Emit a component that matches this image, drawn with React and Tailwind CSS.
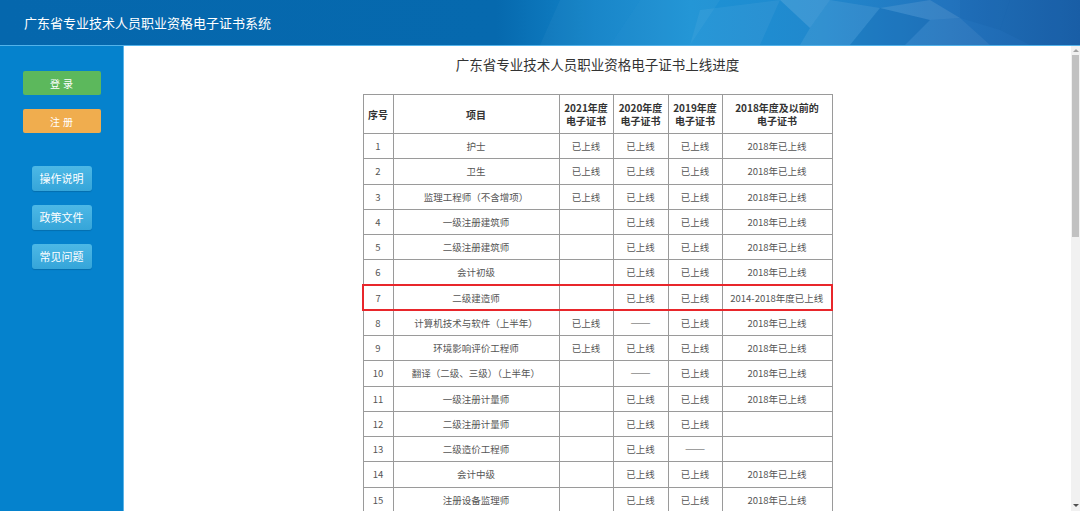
import React from "react";

const rows = [
  ["1", "护士", "已上线", "已上线", "已上线", "2018年已上线"],
  ["2", "卫生", "已上线", "已上线", "已上线", "2018年已上线"],
  ["3", "监理工程师（不含增项）", "已上线", "已上线", "已上线", "2018年已上线"],
  ["4", "一级注册建筑师", "", "已上线", "已上线", "2018年已上线"],
  ["5", "二级注册建筑师", "", "已上线", "已上线", "2018年已上线"],
  ["6", "会计初级", "", "已上线", "已上线", "2018年已上线"],
  ["7", "二级建造师", "", "已上线", "已上线", "2014-2018年度已上线"],
  ["8", "计算机技术与软件（上半年）", "已上线", "——", "已上线", "2018年已上线"],
  ["9", "环境影响评价工程师", "已上线", "已上线", "已上线", "2018年已上线"],
  ["10", "翻译（二级、三级）（上半年）", "", "——", "已上线", "2018年已上线"],
  ["11", "一级注册计量师", "", "已上线", "已上线", "2018年已上线"],
  ["12", "二级注册计量师", "", "已上线", "已上线", ""],
  ["13", "二级造价工程师", "", "已上线", "——", ""],
  ["14", "会计中级", "", "已上线", "已上线", "2018年已上线"],
  ["15", "注册设备监理师", "", "已上线", "已上线", "2018年已上线"],
];

const widths = ["w-[30px]", "w-[166px]", "w-[54px]", "w-[55px]", "w-[54px]", "w-[110px]"];

function HeaderArt() {
  return (
    <svg className="absolute inset-0 h-full w-full" viewBox="0 0 1080 45" preserveAspectRatio="none">
      <polygon points="640,0 720,0 690,45 610,45" fill="#ffffff" opacity="0.04" />
      <polygon points="780,0 830,0 810,28" fill="#ffffff" opacity="0.12" />
      <polygon points="810,28 830,0 880,8 850,45 800,45" fill="#ffffff" opacity="0.08" />
      <polygon points="850,45 880,8 930,20 905,45" fill="#0b4f94" opacity="0.12" />
      <polygon points="880,8 930,0 960,18 930,20" fill="#ffffff" opacity="0.10" />
      <polygon points="930,20 960,18 990,45 905,45" fill="#ffffff" opacity="0.06" />
      <polygon points="960,0 1010,0 1000,30 960,18" fill="#0b4f94" opacity="0.10" />
      <polygon points="1010,0 1080,0 1080,45 1030,45 1000,30" fill="#0b4f94" opacity="0.12" />
      <polygon points="700,10 780,0 760,45 690,45" fill="#ffffff" opacity="0.05" />
      <polygon points="560,0 640,0 610,45 540,45" fill="#ffffff" opacity="0.03" />
    </svg>
  );
}

function SideButton({ children }) {
  return (
    <div className="flex h-[25px] w-[60px] items-center justify-center rounded-[3px] bg-gradient-to-b from-[#4cb8e6] to-[#35a5d9] text-[11px] text-white shadow-[0_1px_1px_rgba(0,0,0,0.15)]">
      {children}
    </div>
  );
}

export default function App() {
  const font = { fontFamily: '"Noto Sans CJK SC", "Liberation Sans", sans-serif' };
  return (
    <div className="flex h-[511px] w-[1080px] flex-col overflow-hidden bg-white" style={font}>
      <div className="relative flex h-[45px] shrink-0 items-center bg-[linear-gradient(90deg,#0567ad_0%,#0669ae_46%,#1283c8_55%,#1c92d5_64%,#2188cd_76%,#2273bd_88%,#1c60a9_100%)] pb-px pl-[24px]">
        <HeaderArt />
        <span className="relative mt-[2px] text-[13px] text-white">广东省专业技术人员职业资格电子证书系统</span>
      </div>
      <div className="h-px shrink-0 bg-[#53b3ea]" />
      <div className="flex min-h-0 flex-1">
        <div className="flex w-[123px] shrink-0 flex-col items-center bg-[#0582cd] pt-[25px]">
          <div className="flex h-[24px] w-[78px] items-center justify-center rounded-[2px] bg-[#5cb85c] pl-[3px] text-[10px] tracking-[3px] text-white">登录</div>
          <div className="mt-[14px] flex h-[24px] w-[78px] items-center justify-center rounded-[2px] bg-[#f0ad4e] pl-[3px] text-[10px] tracking-[3px] text-white">注册</div>
          <div className="mt-[33px] flex flex-col gap-[14px]">
            <SideButton>操作说明</SideButton>
            <SideButton>政策文件</SideButton>
            <SideButton>常见问题</SideButton>
          </div>
        </div>
        <div className="w-px shrink-0 bg-[#5ab4e8]" />
        <div className="flex min-w-0 flex-1 flex-col items-center pt-[8px]">
          <div className="mb-[20px] h-[20px] text-[13.5px] leading-[20px] text-[#333]">广东省专业技术人员职业资格电子证书上线进度</div>
          <table className="border-collapse text-center text-[9.5px] text-[#555]">
            <thead>
              <tr className="h-[39px]">
                {[
                  ["序号"],
                  ["项目"],
                  ["2021年度", "电子证书"],
                  ["2020年度", "电子证书"],
                  ["2019年度", "电子证书"],
                  ["2018年度及以前的", "电子证书"],
                ].map((lines, i) => (
                  <th key={i} className={`${widths[i]} border border-[#9a9a9a] p-0 align-middle text-[10px] font-bold leading-[13px] text-[#333]`}>
                    {lines.map((l, j) => (
                      <div key={j}>{l}</div>
                    ))}
                  </th>
                ))}
              </tr>
            </thead>
            <tbody>
              {rows.map((r, ri) => {
                const hl = ri === 6;
                return (
                  <tr key={ri} className="h-[25.25px]">
                    {r.map((c, ci) => {
                      let cls = "border border-[#9a9a9a] p-0 align-middle whitespace-nowrap";
                      if (hl) {
                        cls = "border border-[#9a9a9a] border-y-2 border-y-[#e8262b] p-0 align-middle whitespace-nowrap";
                        if (ci === 0) cls += " border-l-2 border-l-[#e8262b]";
                        if (ci === 5) cls += " border-r-2 border-r-[#e8262b]";
                      }
                      return (
                        <td key={ci} className={cls}>
                          {c === "——" ? <span className="text-[12px] leading-[12px] text-[#888]">——</span> : c}
                        </td>
                      );
                    })}
                  </tr>
                );
              })}
            </tbody>
          </table>
        </div>
        <div className="flex w-[9px] shrink-0 flex-col items-center bg-[#f1f1f1]">
          <div className="mt-[3px] h-0 w-0 border-x-[3px] border-b-[3px] border-x-transparent border-b-[#a3a3a3]" />
          <div className="mt-[3px] h-[182px] w-[7px] bg-[#c1c1c1]" />
          <div className="flex-1" />
          <div className="mb-[4px] h-0 w-0 border-x-[3px] border-t-[3px] border-x-transparent border-t-[#505050]" />
        </div>
      </div>
    </div>
  );
}
